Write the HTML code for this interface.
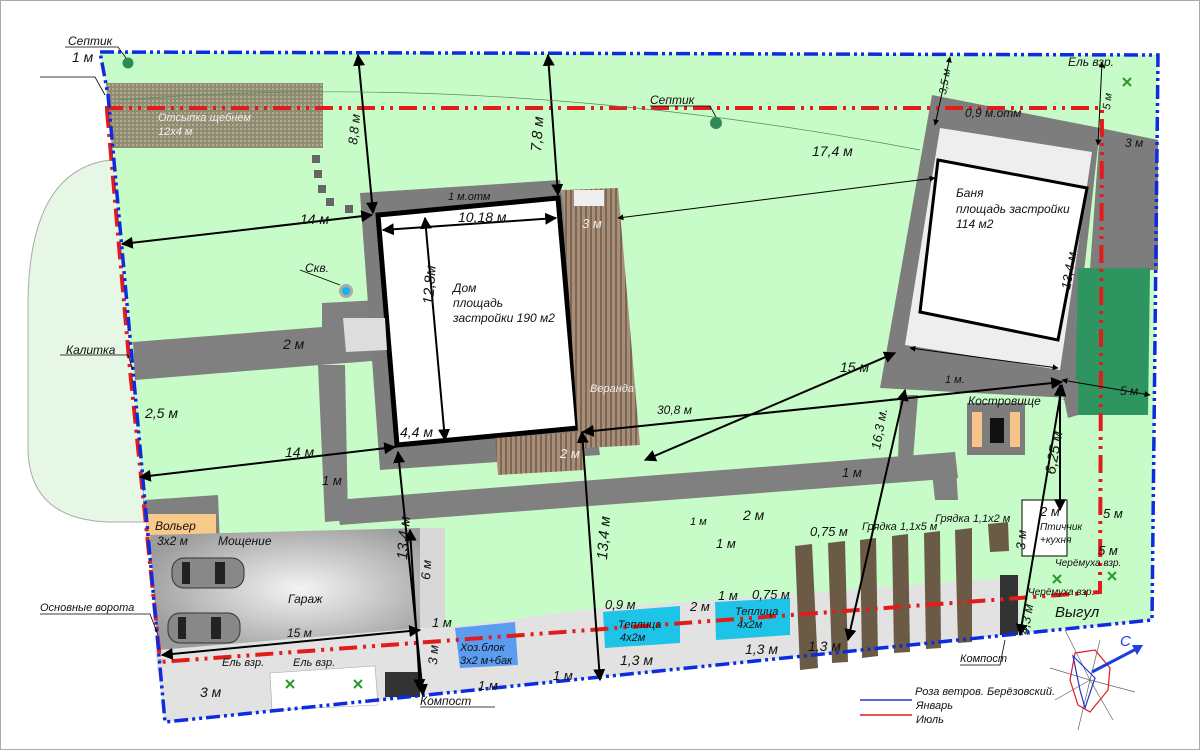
<!DOCTYPE html>
<html><head><meta charset="utf-8"><style>
html,body{margin:0;padding:0;background:#fff}
svg{display:block}
text{font-family:"Liberation Sans",sans-serif;font-style:italic;fill:#111}
</style></head><body>
<svg width="1200" height="750" viewBox="0 0 1200 750" xmlns="http://www.w3.org/2000/svg">
<defs>
<marker id="a" viewBox="0 0 10 10" refX="9" refY="5" markerWidth="6" markerHeight="6" orient="auto-start-reverse"><path d="M0,0L10,5L0,10z" fill="#000"/></marker>
<pattern id="st" width="5" height="5" patternUnits="userSpaceOnUse"><rect width="5" height="5" fill="#a88e78"/><rect width="2" height="5" fill="#7c6654"/></pattern>
<pattern id="gr" width="4" height="4" patternUnits="userSpaceOnUse"><rect width="4" height="4" fill="#8f8c72"/><rect width="2" height="2" fill="#b2ae94"/></pattern>
<radialGradient id="gg" cx="0.55" cy="0.5" r="0.6"><stop offset="0" stop-color="#f4f4f4"/><stop offset="1" stop-color="#9c9c9c"/></radialGradient>
</defs>
<rect x="0" y="0" width="1200" height="750" fill="#fff" stroke="#aaa" stroke-width="2"/>
<!-- outside pale area -->
<path d="M110,160 Q30,170 28,300 L28,450 Q30,520 110,522 L145,522 L125,160 Z" fill="#e6f7e6" stroke="#aaa" stroke-width="1"/>
<!-- site green -->
<polygon points="100,52 1158,55 1152,620 165,722 108,95" fill="#c7fbc7"/>
<!-- bottom light grey strip -->
<polygon points="155,650 430,628 600,608 1010,578 1152,562 1152,620 165,722" fill="#e2e2e2"/>
<polygon points="1020,548 1152,548 1152,618 1020,632" fill="#c7fbc7"/>
<polygon points="445,560 590,550 600,608 445,628" fill="#c7fbc7"/>
<polygon points="270,673 375,666 378,705 272,710" fill="#fff" stroke="#aaa" stroke-width="0.6"/>
<!-- gravel -->
<polygon points="106,83 323,83 323,148 112,148" fill="url(#gr)"/>
<text x="158" y="121" font-size="11" fill="#eee" style="fill:#eee">Отсыпка щебнем</text>
<text x="158" y="135" font-size="11" style="fill:#eee">12х4 м</text>
<!-- dashed stones -->
<g fill="#666"><rect x="312" y="155" width="8" height="8"/><rect x="314" y="170" width="8" height="8"/><rect x="318" y="185" width="8" height="8"/><rect x="326" y="198" width="8" height="8"/><rect x="345" y="205" width="8" height="8"/></g>
<!-- paths grey -->
<g fill="#808080">
<polygon points="133,342 385,322 385,360 320,365 135,380"/>
<polygon points="318,365 345,365 348,520 325,522"/>
<polygon points="322,303 380,300 382,330 322,330"/>
<polygon points="335,500 955,452 958,478 340,525"/>
<polygon points="930,455 955,452 958,500 935,500"/>
<polygon points="900,395 918,395 913,460 898,460"/>
<polygon points="145,500 218,495 220,545 150,548"/>
</g>
<!-- house grey border -->
<polygon points="360,193 560,180 600,455 380,470" fill="#7d7d7d"/>
<polygon points="378,215 558,198 578,428 397,445" fill="#fff" stroke="#000" stroke-width="5"/>
<polygon points="343,318 385,318 387,350 346,352" fill="#ddd"/>
<!-- veranda -->
<polygon points="562,190 618,188 640,445 585,448 585,470 498,475 495,438 578,432" fill="url(#st)"/>
<rect x="574" y="190" width="30" height="16" fill="#eee"/>
<!-- banya -->
<polygon points="932,95 1100,128 1070,398 880,388" fill="#7d7d7d"/>
<polygon points="940,128 1092,152 1060,370 905,345" fill="#eee"/>
<polygon points="938,160 1087,188 1058,340 920,312" fill="#fff" stroke="#000" stroke-width="3"/>
<polygon points="1100,140 1128,145 1122,185 1098,182" fill="#fff" stroke="#888" stroke-width="0.5"/>
<polygon points="1100,128 1158,140 1158,270 1078,270 1070,398 1060,400 1075,400 1080,410" fill="#7d7d7d"/>
<polygon points="1078,268 1150,268 1148,415 1075,415" fill="#2e9460"/>
<polygon points="1060,380 1078,380 1078,415 1068,418" fill="#7d7d7d"/>
<!-- kostrovische -->
<rect x="967" y="403" width="58" height="52" fill="#7d7d7d"/>
<rect x="972" y="412" width="10" height="35" fill="#f6c48a"/>
<rect x="1010" y="412" width="10" height="35" fill="#f6c48a"/>
<rect x="990" y="418" width="14" height="25" fill="#111"/>
<!-- voler -->
<rect x="146" y="514" width="70" height="32" fill="#f9c98a"/>
<!-- garage -->
<polygon points="150,535 420,528 422,628 158,650" fill="url(#gg)"/>
<rect x="420" y="528" width="25" height="100" fill="#d8d8d8"/>
<g fill="#888" stroke="#333" stroke-width="1"><rect x="172" y="558" width="72" height="30" rx="12"/><rect x="168" y="613" width="72" height="30" rx="12"/></g>
<g fill="#222"><rect x="182" y="562" width="8" height="22"/><rect x="215" y="562" width="10" height="22"/><rect x="178" y="617" width="8" height="22"/><rect x="211" y="617" width="10" height="22"/></g>
<!-- khoz blok / greenhouses -->
<polygon points="455,628 515,622 518,665 460,668" fill="#5b9cf0"/>
<polygon points="603,612 680,606 680,643 605,648" fill="#1ec4e8"/>
<polygon points="715,602 790,598 790,635 716,640" fill="#1ec4e8"/>
<!-- beds -->
<g fill="#6b5a45">
<polygon points="795,546 812,544 818,668 800,670"/>
<polygon points="828,543 845,541 848,662 832,663"/>
<polygon points="860,540 876,538 878,656 862,658"/>
<polygon points="892,536 908,534 910,652 894,653"/>
<polygon points="924,533 940,531 941,648 926,649"/>
<polygon points="955,530 972,528 972,642 958,643"/>
<polygon points="988,524 1008,522 1009,551 990,552"/>
</g>
<rect x="1000" y="575" width="18" height="60" fill="#333"/>
<rect x="385" y="672" width="35" height="25" fill="#333"/>
<!-- ptichnik -->
<rect x="1022" y="500" width="45" height="56" fill="#fff" stroke="#000" stroke-width="1"/>
<!-- circles -->
<circle cx="128" cy="63" r="5.5" fill="#2e8b57"/>
<circle cx="716" cy="123" r="6" fill="#2e8b57"/>
<circle cx="346" cy="291" r="7" fill="#aaa"/><circle cx="346" cy="291" r="4" fill="#18b4e8"/>
<!-- red & blue lines -->
<polyline points="105,108 1102,108 1100,592 160,662" fill="none" stroke="#e21b1b" stroke-width="4" stroke-dasharray="18,6,3,6,3,6"/>
<polyline points="107,110 130,370 160,660" fill="none" stroke="#e21b1b" stroke-width="4" stroke-dasharray="18,6,3,6"/>
<polygon points="100,52 1158,55 1152,620 165,722 108,95" fill="none" stroke="#0d2ce0" stroke-width="3.5" stroke-dasharray="14,4,3,4,3,4"/>
<!-- dimension arrows -->
<g stroke="#000" stroke-width="2" fill="none" marker-start="url(#a)" marker-end="url(#a)">
<line x1="358" y1="55" x2="373" y2="213"/>
<line x1="548" y1="55" x2="558" y2="195"/>
<line x1="122" y1="244" x2="372" y2="215"/>
<line x1="383" y1="230" x2="556" y2="218"/>
<line x1="425" y1="218" x2="445" y2="440"/>
<line x1="140" y1="477" x2="395" y2="447"/>
<line x1="398" y1="452" x2="423" y2="695"/>
<line x1="410" y1="530" x2="420" y2="690"/>
<line x1="582" y1="432" x2="600" y2="680"/>
<line x1="583" y1="432" x2="1062" y2="382"/>
<line x1="645" y1="460" x2="895" y2="353"/>
<line x1="905" y1="390" x2="848" y2="640"/>
<line x1="1062" y1="385" x2="1020" y2="635"/>
<line x1="1060" y1="385" x2="1060" y2="510"/>
<line x1="162" y1="655" x2="420" y2="630"/>
</g>
<g stroke="#000" stroke-width="1" fill="none" marker-start="url(#a)" marker-end="url(#a)">
<line x1="618" y1="218" x2="935" y2="178"/>
<line x1="910" y1="348" x2="1058" y2="368"/>
<line x1="1062" y1="380" x2="1150" y2="395"/>
<line x1="950" y1="57" x2="935" y2="125"/>
<line x1="1102" y1="62" x2="1098" y2="145"/>
</g>
<!-- labels -->
<g font-size="13">
<text x="68" y="45" font-size="12">Септик</text>
<text x="72" y="62" font-size="14">1 м</text>
<text x="650" y="104" font-size="12">Септик</text>
<text x="1068" y="66" font-size="12">Ель взр.</text>
<text x="448" y="200" font-size="11">1 м.отм</text>
<text x="458" y="222" font-size="14">10,18 м</text>
<text x="582" y="228" font-size="13" style="fill:#eee">3 м</text>
<text x="300" y="224" font-size="14">14 м</text>
<text x="812" y="156" font-size="14">17,4 м</text>
<text x="965" y="117" font-size="12">0,9 м.отм</text>
<text x="1125" y="147" font-size="12">3 м</text>
<text x="453" y="292" font-size="12">Дом</text>
<text x="453" y="307" font-size="12">площадь</text>
<text x="453" y="322" font-size="12">застройки 190 м2</text>
<text x="956" y="197" font-size="12">Баня</text>
<text x="956" y="213" font-size="12">площадь застройки</text>
<text x="956" y="228" font-size="12">114 м2</text>
<text x="305" y="272" font-size="12">Скв.</text>
<text x="283" y="349" font-size="14">2 м</text>
<text x="66" y="354" font-size="12">Калитка</text>
<text x="145" y="418" font-size="14">2,5 м</text>
<text x="285" y="457" font-size="14">14 м</text>
<text x="400" y="437" font-size="14">4,4 м</text>
<text x="322" y="485" font-size="13">1 м</text>
<text x="560" y="458" font-size="13" style="fill:#eee">2 м</text>
<text x="590" y="392" font-size="11" style="fill:#eee">Веранда</text>
<text x="657" y="414" font-size="12">30,8 м</text>
<text x="840" y="372" font-size="14">15 м</text>
<text x="968" y="405" font-size="12">Костровище</text>
<text x="945" y="383" font-size="11">1 м.</text>
<text x="1120" y="395" font-size="12">5 м</text>
<text x="842" y="477" font-size="13">1 м</text>
<text x="155" y="530" font-size="12">Вольер</text>
<text x="157" y="545" font-size="12">3х2 м</text>
<text x="218" y="545" font-size="12">Мощение</text>
<text x="288" y="603" font-size="12">Гараж</text>
<text x="40" y="611" font-size="11">Основные ворота</text>
<text x="287" y="637" font-size="12">15 м</text>
<text x="432" y="627" font-size="13">1 м</text>
<text x="460" y="651" font-size="11">Хоз.блок</text>
<text x="460" y="664" font-size="11">3х2 м+бак</text>
<text x="222" y="666" font-size="11">Ель взр.</text>
<text x="293" y="666" font-size="11">Ель взр.</text>
<text x="200" y="697" font-size="14">3 м</text>
<text x="420" y="705" font-size="12">Компост</text>
<text x="478" y="690" font-size="13">1 м</text>
<text x="553" y="680" font-size="13">1 м</text>
<text x="605" y="609" font-size="13">0,9 м</text>
<text x="620" y="665" font-size="14">1,3 м</text>
<text x="618" y="628" font-size="11">Теплица</text>
<text x="620" y="641" font-size="11">4х2м</text>
<text x="690" y="611" font-size="13">2 м</text>
<text x="718" y="600" font-size="13">1 м</text>
<text x="752" y="599" font-size="13">0,75 м</text>
<text x="735" y="615" font-size="11">Теплица</text>
<text x="737" y="628" font-size="11">4х2м</text>
<text x="745" y="654" font-size="14">1,3 м</text>
<text x="808" y="651" font-size="14">1,3 м</text>
<text x="743" y="520" font-size="14">2 м</text>
<text x="690" y="525" font-size="11">1 м</text>
<text x="716" y="548" font-size="13">1 м</text>
<text x="810" y="536" font-size="13">0,75 м</text>
<text x="862" y="530" font-size="11">Грядка 1,1х5 м</text>
<text x="935" y="522" font-size="11">Грядка 1,1х2 м</text>
<text x="1040" y="516" font-size="13">2 м</text>
<text x="1103" y="518" font-size="13">5 м</text>
<text x="1098" y="555" font-size="13">5 м</text>
<text x="1040" y="530" font-size="10">Птичник</text>
<text x="1040" y="543" font-size="10">+кухня</text>
<text x="1055" y="566" font-size="10">Черёмуха взр.</text>
<text x="1028" y="595" font-size="10">Черёмуха взр.</text>
<text x="1055" y="617" font-size="15">Выгул</text>
<text x="960" y="662" font-size="11">Компост</text>
<text x="915" y="695" font-size="11">Роза ветров. Берёзовский.</text>
<text x="916" y="709" font-size="11">Январь</text>
<text x="916" y="723" font-size="11">Июль</text>
<text x="1120" y="646" font-size="15" style="fill:#1d3ee0">С</text>
</g>
<g font-size="13">
<text transform="translate(357,145) rotate(-84)">8,8 м</text>
<text transform="translate(541,152) rotate(-86)" font-size="15">7,8 м</text>
<text transform="translate(433,305) rotate(-86)" font-size="15">12,8м</text>
<text transform="translate(1070,290) rotate(-80)">13,4 м</text>
<text transform="translate(407,560) rotate(-86)" font-size="15">13,4 м</text>
<text transform="translate(607,560) rotate(-86)" font-size="15">13,4 м</text>
<text transform="translate(430,580) rotate(-86)">6 м</text>
<text transform="translate(437,665) rotate(-86)">3 м</text>
<text transform="translate(880,450) rotate(-80)">16,3 м.</text>
<text transform="translate(1055,475) rotate(-80)" font-size="15">6,25 м</text>
<text transform="translate(1025,550) rotate(-86)">3 м</text>
<text transform="translate(1028,635) rotate(-80)">4,3 м</text>
<text transform="translate(946,95) rotate(-80)" font-size="11">3,5 м</text>
<text transform="translate(1110,110) rotate(-84)" font-size="11">5 м</text>
</g>
<line x1="860" y1="700" x2="912" y2="700" stroke="#2233cc" stroke-width="1.5"/>
<line x1="860" y1="715" x2="912" y2="715" stroke="#e21b1b" stroke-width="1.5"/>
<!-- wind rose -->
<g stroke="#666" stroke-width="0.7">
<line x1="1090" y1="680" x2="1065" y2="630"/><line x1="1090" y1="680" x2="1100" y2="640"/><line x1="1090" y1="680" x2="1135" y2="692"/><line x1="1090" y1="680" x2="1113" y2="720"/><line x1="1090" y1="680" x2="1078" y2="730"/><line x1="1090" y1="680" x2="1055" y2="700"/><line x1="1090" y1="680" x2="1050" y2="668"/>
</g>
<polygon points="1075,653 1095,650 1110,668 1108,690 1090,712 1078,705 1070,680" fill="none" stroke="#e21b1b" stroke-width="1.2"/>
<polygon points="1073,656 1095,678 1085,708 1080,690" fill="none" stroke="#2233cc" stroke-width="1.2"/>
<line x1="1092" y1="672" x2="1140" y2="647" stroke="#1d3ee0" stroke-width="3"/>
<path d="M1143,645 L1132,645 L1137,655 Z" fill="#1d3ee0"/>
<g stroke="#2a9a2a" stroke-width="2"><path d="M1123,78 l8,8 m0,-8 l-8,8"/><path d="M286,680 l8,8 m0,-8 l-8,8"/><path d="M354,680 l8,8 m0,-8 l-8,8"/><path d="M1053,575 l8,8 m0,-8 l-8,8"/><path d="M1108,572 l8,8 m0,-8 l-8,8"/></g>
<g stroke="#000" stroke-width="0.8" fill="none"><path d="M40,77 L95,77 L105,95"/><path d="M65,47 L118,47 L126,58"/><path d="M60,355 L128,355 L133,370"/><path d="M40,614 L150,614 L158,635"/><path d="M300,270 L340,285"/><path d="M650,106 L710,106 L716,117"/><path d="M420,707 L495,707"/><path d="M960,665 L1000,665 L1005,640"/></g>
<path d="M120,100 Q500,70 920,150" fill="none" stroke="#558855" stroke-width="0.7"/>
</svg>
</body></html>
